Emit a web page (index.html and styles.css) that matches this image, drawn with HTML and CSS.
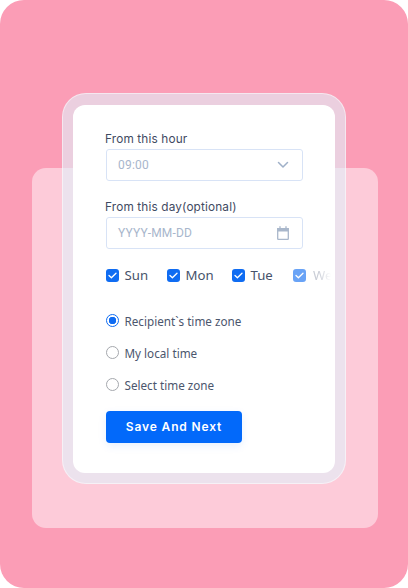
FILE: index.html
```html
<!DOCTYPE html>
<html lang="en">
<head>
<meta charset="utf-8">
<title>Schedule</title>
<link rel="stylesheet" href="styles.css">
</head>
<body>
<main class="screen">
  <div class="back-panel"></div>
  <div class="glass">
    <form class="card">
      <div class="field field-hour">
        <label class="label">From this hour</label>
        <div class="input">
          <span class="value">09:00</span>
          <svg class="icon" width="12" height="8" viewBox="0 0 12 8"><path d="M1.500 1.500 6 6l4.500-4.500" fill="none" stroke="#9fb0c8" stroke-width="1.500" stroke-linecap="round" stroke-linejoin="round"/></svg>
        </div>
      </div>
      <div class="field field-day">
        <label class="label">From this day(optional)</label>
        <div class="input">
          <span class="value">YYYY-MM-DD</span>
          <svg class="icon" width="12" height="14" viewBox="0 0 12 14"><path d="M.7 2.700h10.600v10a.6.6 0 0 1-.6.6H1.300a.6.6 0 0 1-.6-.6z" fill="none" stroke="#a9b7cb" stroke-width="1.300"/><path d="M.7 2.500h10.600v3H.7z" fill="#a9b7cb"/><path d="M3 .7v2.500M9 .7v2.500" stroke="#a9b7cb" stroke-width="1.300" stroke-linecap="round"/></svg>
        </div>
      </div>
      <div class="days">
        <span class="day day-sun"><span class="check"><svg width="9" height="7" viewBox="0 0 9 7"><path d="M1 3.500 3.400 5.800 8 1.200" fill="none" stroke="#fff" stroke-width="1.300" stroke-linecap="round" stroke-linejoin="round"/></svg></span>Sun</span>
        <span class="day day-mon"><span class="check"><svg width="9" height="7" viewBox="0 0 9 7"><path d="M1 3.500 3.400 5.800 8 1.200" fill="none" stroke="#fff" stroke-width="1.300" stroke-linecap="round" stroke-linejoin="round"/></svg></span>Mon</span>
        <span class="day day-tue"><span class="check"><svg width="9" height="7" viewBox="0 0 9 7"><path d="M1 3.500 3.400 5.800 8 1.200" fill="none" stroke="#fff" stroke-width="1.300" stroke-linecap="round" stroke-linejoin="round"/></svg></span>Tue</span>
        <span class="day day-wed"><span class="check"><svg width="9" height="7" viewBox="0 0 9 7"><path d="M1 3.500 3.400 5.800 8 1.200" fill="none" stroke="#fff" stroke-width="1.300" stroke-linecap="round" stroke-linejoin="round"/></svg></span><span class="fade">Wed</span></span>
      </div>
      <div class="radios">
        <span class="radio-row"><span class="radio radio-on"></span>Recipient`s time zone</span>
        <span class="radio-row"><span class="radio"></span>My local time</span>
        <span class="radio-row"><span class="radio"></span>Select time zone</span>
      </div>
      <button class="save" type="button">Save And Next</button>
    </form>
  </div>
</main>
</body>
</html>
```
FILE: styles.css
```css
* { box-sizing: border-box; }
html, body { margin: 0; padding: 0; background: #fff; }
.screen {
  position: relative;
  width: 408px;
  height: 588px;
  overflow: hidden;
  background: #fb9db6;
  border-radius: 24px;
  padding: 93px 62px 0;
}
.back-panel {
  position: absolute;
  left: 32px;
  top: 168px;
  width: 346px;
  height: 360px;
  border-radius: 14px;
  background: #fdcbd9;
}
.glass {
  position: relative;
  width: 284px;
  height: 391px;
  padding: 10.500px 10px;
  border-radius: 24px;
  border: 1.500px solid rgba(255, 255, 255, 0.5);
  background: rgba(225, 242, 252, 0.59);
}
.card {
  height: 368px;
  width: 262px;
  background: #fff;
  border-radius: 12px;
  padding: 25px 0 0 32px;
  overflow: hidden;
}
.field { width: 198px; }
.field-day { margin-top: 17px; }
.label {
  display: block;
  font: 400 11.800px/18px "Inter", sans-serif;
  letter-spacing: 0.150px;
  color: #3f4a62;
}
.input {
  margin: 1px 0 0 1px;
  height: 32px;
  width: 197px;
  border: 1px solid #d8e3f6;
  border-radius: 3px;
  display: flex;
  align-items: center;
  justify-content: space-between;
  padding: 0 13px 0 11px;
  background: #fff;
}
.value {
  font: 400 12px/16px "Roboto", sans-serif;
  letter-spacing: 0.200px;
  color: #a8b6cc;
}
.days {
  display: flex;
  margin: 17.500px 0 0 1px;
  width: 226px;
  white-space: nowrap;
}
.day {
  display: inline-flex;
  align-items: center;
  gap: 5.500px;
  font: 400 13.200px/18px "Noto Sans", sans-serif;
  color: #46526a;
  flex: none;
}
.day-sun { width: 61px; }
.day-mon { width: 65px; }
.day-tue { width: 61px; }
.check {
  width: 13px;
  height: 13px;
  border-radius: 3px;
  background: #0f6cf2;
  display: inline-flex;
  align-items: center;
  justify-content: center;
  flex: none;
}
.day-wed .check { opacity: 0.62; }
.day-wed { gap: 7px; }
.fade {
  color: #c9cdd6;
  width: 18px;
  overflow: hidden;
  -webkit-mask-image: linear-gradient(90deg, #000 30%, transparent 100%);
  mask-image: linear-gradient(90deg, #000 30%, transparent 100%);
}
.radios {
  display: flex;
  flex-direction: column;
  gap: 14.200px;
  margin: 27.500px 0 0 1px;
}
.radio-row {
  display: flex;
  align-items: center;
  gap: 5.500px;
  font: 400 11.700px/18px "Noto Sans", sans-serif;
  color: #4b566d;
}
.radio {
  width: 13px;
  height: 13px;
  border-radius: 50%;
  border: 1px solid #a5a8ad;
  flex: none;
}
.radio-on {
  border-color: #0f6cf2;
  background: radial-gradient(circle, #0f6cf2 0 3.500px, #fff 4px);
}
.save {
  display: block;
  margin: 17.500px 0 0 1px;
  width: 136px;
  height: 32px;
  border: 0;
  border-radius: 4px;
  background: #0269fa;
  color: #fff;
  font: 600 12px/32px "Inter", sans-serif;
  letter-spacing: 0.850px;
  padding: 0;
  box-shadow: 0 3px 8px rgba(2, 105, 250, 0.1);
}
```
